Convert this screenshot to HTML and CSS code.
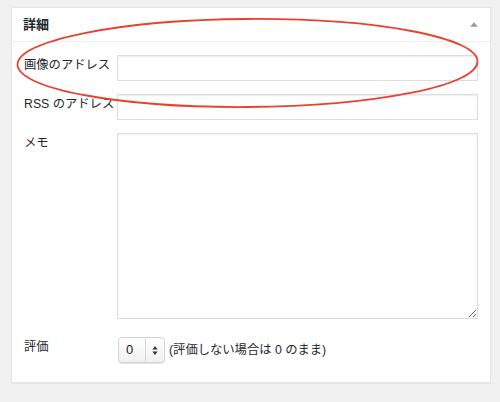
FILE: index.html
```html
<!DOCTYPE html>
<html lang="ja">
<head>
<meta charset="utf-8">
<link rel="stylesheet" href="styles.css">
</head>
<body>
<div class="postbox">
  <div class="hndle">
    <h2 class="title">詳細</h2>
    <svg class="toggle" width="8" height="5" viewBox="0 0 8 5"><path d="M4 0.3 L7.8 4.8 L0.2 4.8 Z" fill="#999"/></svg>
  </div>
  <div class="inside">
    <div class="form">
      <label class="lbl">画像のアドレス</label>
      <input class="txt" type="text">
      <label class="lbl">RSS のアドレス</label>
      <input class="txt" type="text">
      <label class="lbl">メモ</label>
      <textarea class="memo"></textarea>
      <label class="lbl rate-lbl">評価</label>
      <div class="rate">
        <div class="select">
          <span class="val">0</span>
          <span class="arrows">
            <svg width="6" height="9" viewBox="0 0 6 9"><path d="M3 0 L5.6 3.4 L0.4 3.4 Z M3 9 L5.6 5.6 L0.4 5.6 Z" fill="#333"/></svg>
          </span>
        </div>
        <span class="note">(評価しない場合は 0 のまま)</span>
      </div>
    </div>
  </div>
</div>
<svg class="annot" width="500" height="402" viewBox="0 0 500 402">
  <ellipse cx="247.5" cy="63" rx="230" ry="44" fill="none" stroke="#e8432e" stroke-width="1.8" transform="rotate(-0.4 247.5 63)"/>
</svg>
</body>
</html>
```

FILE: styles.css
```css
html, body {
  margin: 0;
  padding: 0;
  background: #f1f1f1;
}
body {
  width: 500px;
  height: 402px;
  position: relative;
  padding: 7px 0 0 11px;
  box-sizing: border-box;
  font-family: "Liberation Sans", "Noto Sans CJK JP", sans-serif;
  font-size: 12px;
  color: #23282d;
}
.postbox {
  width: 480px;
  height: 376px;
  box-sizing: border-box;
  background: #fff;
  border: 1px solid #e5e5e5;
  box-shadow: 0 1px 1px rgba(0,0,0,0.04);
}
.hndle {
  height: 33px;
  border-bottom: 1px solid #eee;
  display: flex;
  align-items: center;
  justify-content: space-between;
  padding: 0 12px 0 11px;
}
.title {
  margin: 0;
  font-size: 13px;
  font-weight: bold;
  line-height: 20px;
  color: #23282d;
}
.toggle {
  display: block;
  margin-top: -1px;
}
.inside {
  padding: 13px 12px 0 12px;
}
.form {
  display: grid;
  grid-template-columns: 93px 1fr;
  row-gap: 13px;
}
.lbl {
  line-height: 20px;
  align-self: start;
  white-space: nowrap;
  color: #23282d;
  font-size: 12.3px;
}
.txt {
  margin: 0;
  height: 26px;
  box-sizing: border-box;
  border: 1px solid #ddd;
  box-shadow: inset 0 1px 2px rgba(0,0,0,0.07);
  background: #fff;
  width: 361px;
  outline: none;
}
.memo {
  margin: 0;
  height: 186px;
  width: 361px;
  box-sizing: border-box;
  border: 1px solid #ddd;
  box-shadow: inset 0 1px 2px rgba(0,0,0,0.07);
  background: #fff;
  resize: both;
}
.rate-lbl {
  margin-top: 5px;
}
.rate {
  margin-top: 5px;
  display: flex;
  align-items: center;
  padding-left: 1px;
}
.select {
  width: 47px;
  height: 26px;
  box-sizing: border-box;
  border: 1px solid #d4d4d4;
  border-radius: 4px;
  background: linear-gradient(#ffffff, #f1f1f1);
  box-shadow: 0 1px 1px rgba(0,0,0,0.12);
  display: flex;
  align-items: stretch;
}
.val {
  width: 27px;
  box-sizing: border-box;
  padding-left: 7px;
  line-height: 24px;
  font-size: 13px;
  color: #222;
  border-right: 1px solid #d9d9d9;
}
.arrows {
  flex: 1;
  display: flex;
  align-items: center;
  justify-content: center;
}
.arrows svg {
  display: block;
}
.note {
  margin-left: 4px;
  line-height: 20px;
  color: #23282d;
  font-size: 12.3px;
}
.annot {
  position: absolute;
  left: 0;
  top: 0;
  pointer-events: none;
}
```
